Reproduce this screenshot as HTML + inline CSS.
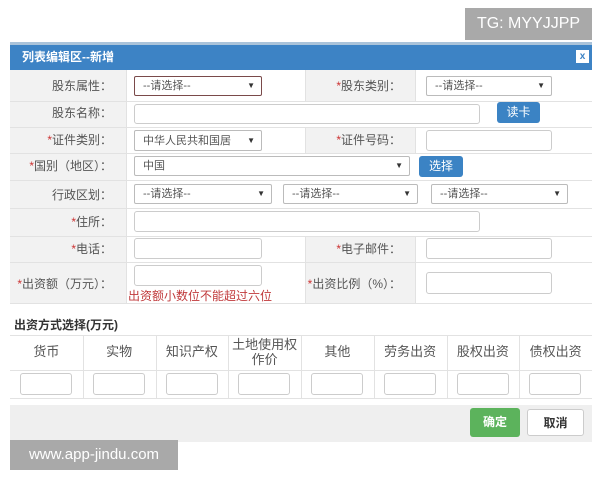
<!DOCTYPE html><html><head><meta charset="utf-8"><style>
body{margin:0;width:600px;height:480px;background:#fff;position:relative;overflow:hidden;font-family:"Liberation Sans","Noto Sans CJK SC",sans-serif;font-size:12px;color:#444}
.a{position:absolute;box-sizing:border-box}
.lab{background:#f2f2f2;text-align:right;padding-right:14px;color:#555}
.in{background:#fff;border:1px solid #ccc;border-radius:3px}
.sel{background:#fff;border:1px solid #bbb;border-radius:2px;padding-left:8px;line-height:18px;font-size:11px;color:#555}
.sel:after{content:"▼";position:absolute;right:6px;top:0;font-size:8px;color:#333}
.btn{background:#3b83c4;color:#fff;border-radius:3px;text-align:center;line-height:21px}
.hl{border-top:1px solid #e2e2e2}
.vl{width:1px;background:#e2e2e2}
.r{color:#c33}
</style></head><body>
<div class="a" style="left:465px;top:8px;width:127px;height:32px;background:#a9a9a9;color:#fff;font-size:16px;line-height:32px;text-align:center">TG: MYYJJPP</div>
<div class="a" style="left:10px;top:42px;width:582px;height:28px;background:#3d83c5;border-top:3px solid #aac3da;color:#fff;font-weight:bold;line-height:25px;padding-left:12px">列表编辑区--新增</div>
<div class="a" style="left:576px;top:50px;width:13px;height:13px;background:#fff;color:#3d83c5;font-size:10px;font-weight:bold;text-align:center;line-height:13px">x</div>
<div class="a lab" style="left:10px;top:70px;width:116px;height:233px"></div>
<div class="a" style="left:305px;top:70px;width:110px;height:31px;background:#f2f2f2"></div>
<div class="a" style="left:305px;top:127px;width:110px;height:26px;background:#f2f2f2"></div>
<div class="a" style="left:305px;top:236px;width:110px;height:67px;background:#f2f2f2"></div>
<div class="a vl" style="left:305px;top:70px;height:31px"></div>
<div class="a vl" style="left:415px;top:70px;height:31px"></div>
<div class="a vl" style="left:305px;top:127px;height:26px"></div>
<div class="a vl" style="left:415px;top:127px;height:26px"></div>
<div class="a vl" style="left:305px;top:236px;height:67px"></div>
<div class="a vl" style="left:415px;top:236px;height:67px"></div>
<div class="a hl" style="left:10px;top:101px;width:582px"></div>
<div class="a hl" style="left:10px;top:127px;width:582px"></div>
<div class="a hl" style="left:10px;top:153px;width:582px"></div>
<div class="a hl" style="left:10px;top:180px;width:582px"></div>
<div class="a hl" style="left:10px;top:208px;width:582px"></div>
<div class="a hl" style="left:10px;top:236px;width:582px"></div>
<div class="a hl" style="left:10px;top:262px;width:582px"></div>
<div class="a hl" style="left:10px;top:303px;width:582px"></div>
<div class="a" style="left:126px;top:70px;width:1px;height:233px;background:#e2e2e2"></div>
<div class="a lab" style="left:10px;top:77px;width:116px">股东属性：</div>
<div class="a lab" style="left:10px;top:104px;width:116px">股东名称：</div>
<div class="a lab" style="left:10px;top:131px;width:116px"><span class="r">*</span>证件类别：</div>
<div class="a lab" style="left:10px;top:157px;width:116px"><span class="r">*</span>国别（地区）：</div>
<div class="a lab" style="left:10px;top:186px;width:116px">行政区划：</div>
<div class="a lab" style="left:10px;top:213px;width:116px"><span class="r">*</span>住所：</div>
<div class="a lab" style="left:10px;top:240px;width:116px"><span class="r">*</span>电话：</div>
<div class="a lab" style="left:10px;top:275px;width:116px"><span class="r">*</span>出资额（万元）：</div>
<div class="a lab" style="left:305px;top:77px;width:110px;background:none"><span class="r">*</span>股东类别：</div>
<div class="a lab" style="left:305px;top:131px;width:110px;background:none"><span class="r">*</span>证件号码：</div>
<div class="a lab" style="left:305px;top:240px;width:110px;background:none"><span class="r">*</span>电子邮件：</div>
<div class="a lab" style="left:305px;top:275px;width:110px;background:none"><span class="r">*</span>出资比例（%）：</div>
<div class="a sel" style="left:134px;top:76px;width:128px;height:20px;border-color:#7a4a4a">--请选择--</div>
<div class="a sel" style="left:426px;top:76px;width:126px;height:20px">--请选择--</div>
<div class="a in" style="left:134px;top:104px;width:346px;height:20px"></div>
<div class="a btn" style="left:497px;top:102px;width:43px;height:21px">读卡</div>
<div class="a sel" style="left:134px;top:130px;width:128px;height:21px;line-height:20px">中华人民共和国居</div>
<div class="a in" style="left:426px;top:130px;width:126px;height:21px"></div>
<div class="a sel" style="left:134px;top:156px;width:276px;height:20px">中国</div>
<div class="a btn" style="left:419px;top:156px;width:44px;height:21px">选择</div>
<div class="a sel" style="left:134px;top:184px;width:138px;height:20px">--请选择--</div>
<div class="a sel" style="left:283px;top:184px;width:135px;height:20px">--请选择--</div>
<div class="a sel" style="left:431px;top:184px;width:137px;height:20px">--请选择--</div>
<div class="a in" style="left:134px;top:211px;width:346px;height:21px"></div>
<div class="a in" style="left:134px;top:238px;width:128px;height:21px"></div>
<div class="a in" style="left:426px;top:238px;width:126px;height:21px"></div>
<div class="a in" style="left:134px;top:265px;width:128px;height:21px"></div>
<div class="a" style="left:128px;top:287px;color:#c0393b">出资额小数位不能超过六位</div>
<div class="a in" style="left:426px;top:272px;width:126px;height:22px"></div>
<div class="a" style="left:14px;top:316px;font-weight:bold;color:#333">出资方式选择(万元)</div>
<div class="a hl" style="left:10px;top:335px;width:582px"></div>
<div class="a hl" style="left:10px;top:370px;width:582px"></div>
<div class="a hl" style="left:10px;top:398px;width:582px"></div>
<div id="t"></div>
<div class="a" style="left:10px;top:405px;width:582px;height:37px;background:#efefef"></div>
<div class="a" style="left:470px;top:408px;width:50px;height:29px;background:#5cb35c;border-radius:3px;color:#fff;text-align:center;line-height:29px;font-weight:bold">确定</div>
<div class="a" style="left:527px;top:409px;width:57px;height:27px;background:#fff;border:1px solid #ccc;border-radius:3px;text-align:center;line-height:27px;color:#333;font-weight:bold">取消</div>
<div class="a" style="left:10px;top:440px;width:168px;height:30px;background:#a9a9a9;color:#fff;font-size:15px;line-height:30px;text-align:center">www.app-jindu.com</div>
<script>
var n=["货币","实物","知识产权","土地使用权<br>作价","其他","劳务出资","股权出资","债权出资"],h="";
for(var i=0;i<8;i++){var x=10+i*72.75;
if(i)h+='<div class="a" style="left:'+x+'px;top:335px;width:1px;height:63px;background:#e2e2e2"></div>';
h+='<div class="a" style="left:'+x+'px;top:'+(i==3?337:344)+'px;width:72.75px;text-align:center;font-size:13px;line-height:15px;color:#555">'+n[i]+'</div>';
h+='<div class="a in" style="left:'+(x+10)+'px;top:373px;width:52px;height:22px"></div>';}
document.getElementById("t").innerHTML=h;
</script>
</body></html>
